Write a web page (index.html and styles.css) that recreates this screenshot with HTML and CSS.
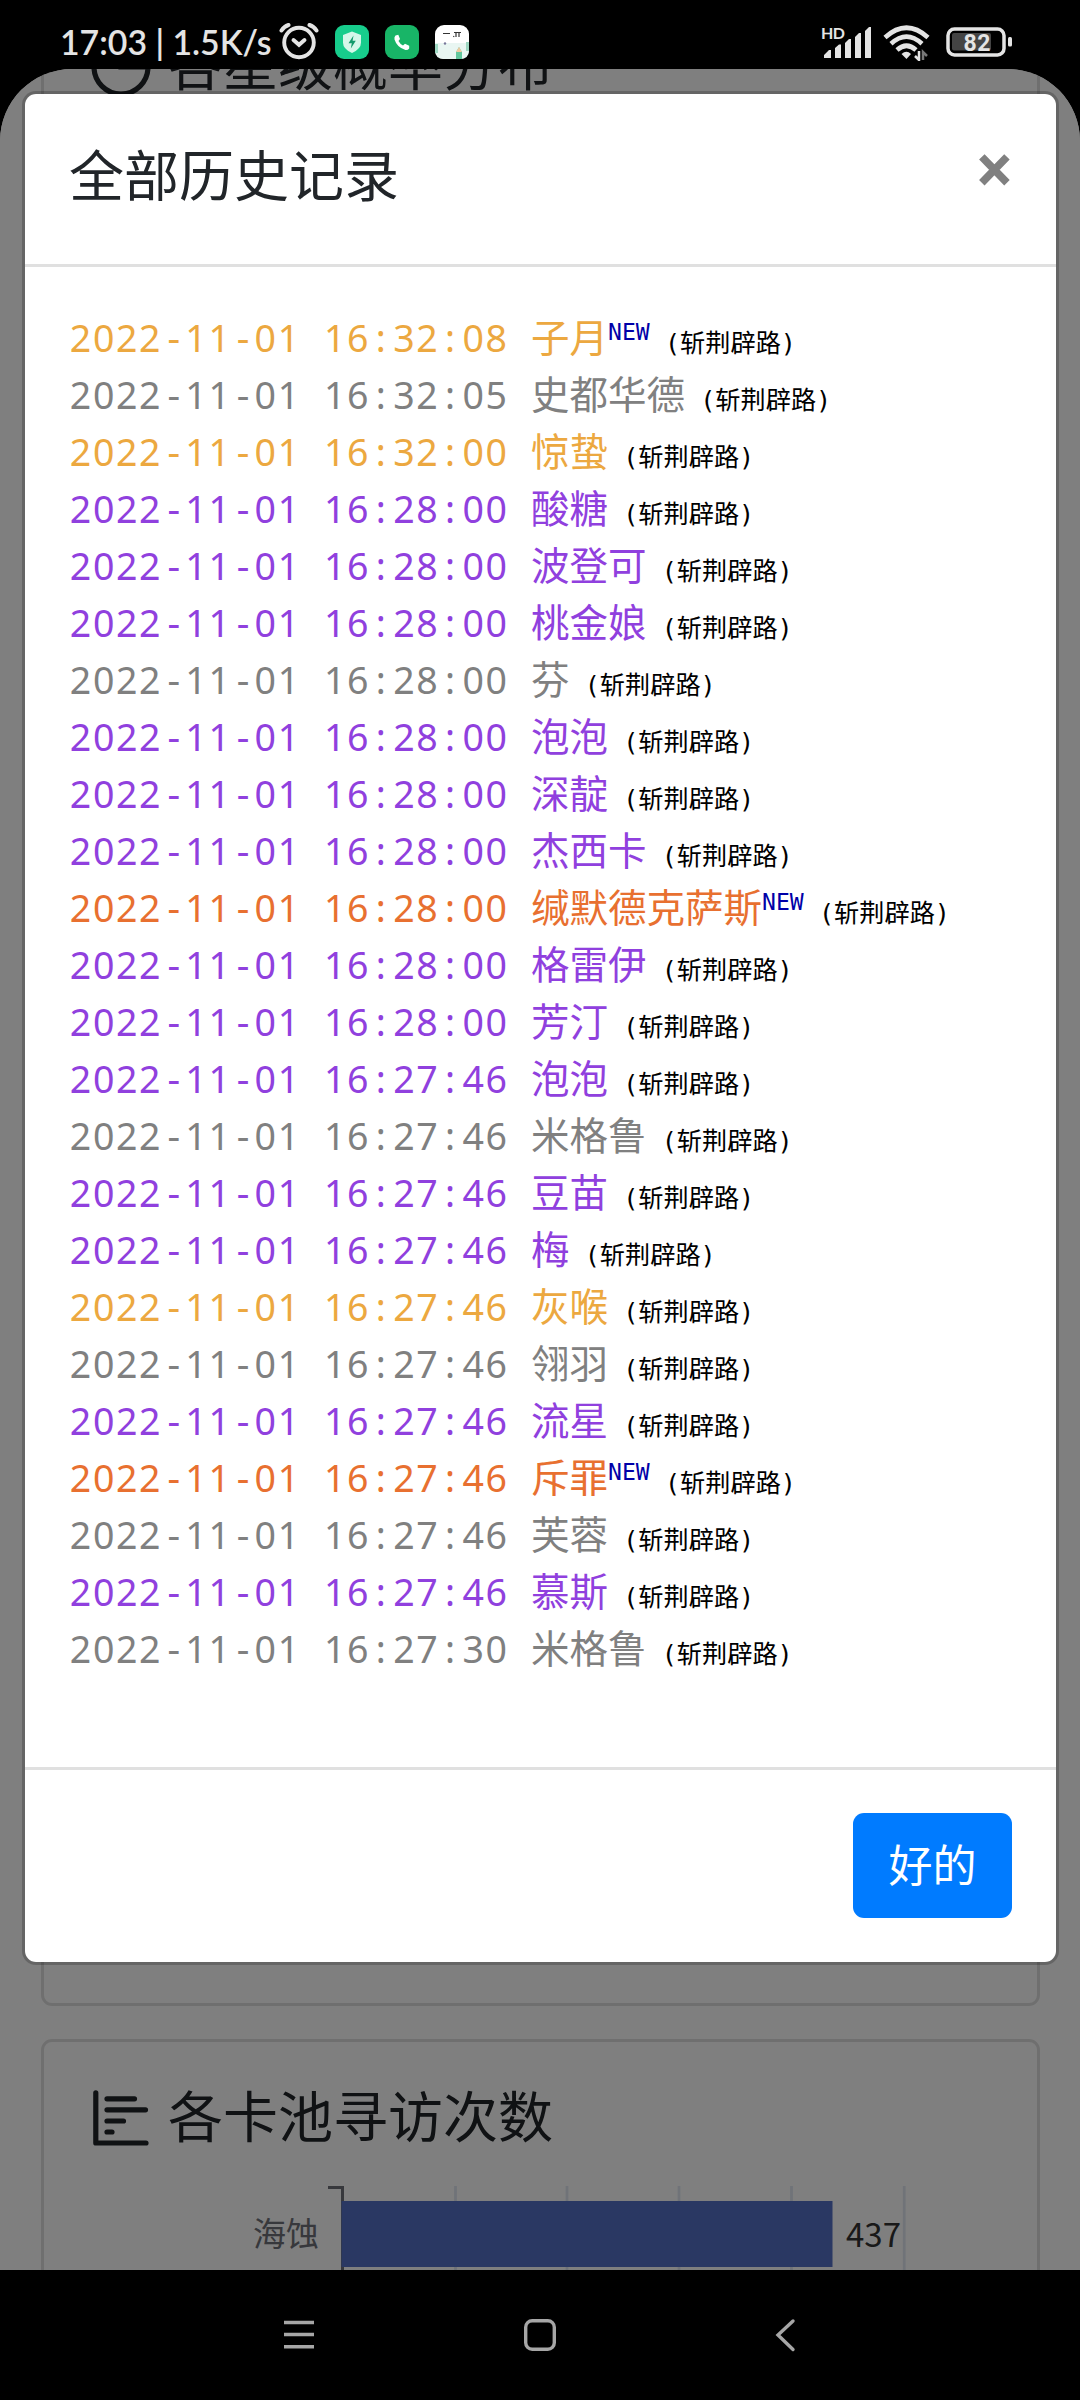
FILE: index.html
```html
<!DOCTYPE html>
<html lang="zh-CN">
<head>
  <meta charset="UTF-8" />
  <title>全部历史记录</title>
  <link rel="stylesheet" href="styles.css">
</head>
<body>

  <div class="status-bar">
    <span class="clock">17:03 | 1.5K/s</span>
    <svg class="alarm" width="40" height="38" viewBox="0 0 40 38" fill="none" stroke="#e4e4e4" stroke-linecap="round">
      <circle cx="20" cy="20.5" r="14.8" stroke-width="3.9" />
      <path d="M2.500 8.500Q5 4.500 9.500 3M37.500 8.500Q35 4.500 30.500 3" stroke-width="4" />
      <path d="M14.500 18L20 22.800L25.500 18" stroke-width="3.900" />
    </svg>
    <svg class="app-icon" width="34" height="34" viewBox="0 0 34 34">
      <rect width="34" height="34" rx="9" fill="#17cd8c" />
      <path d="M17 6.500L26 10V17.500Q26 24 17 28Q8 24 8 17.500V10Z" fill="#d5f7ea" />
      <path d="M18.500 10.500L13.500 18.300H16.800L15.800 23.500L20.800 15.800H17.600Z" fill="#149a6c" />
    </svg>
    <svg class="app-icon" width="34" height="34" viewBox="0 0 34 34">
      <rect width="34" height="34" rx="9" fill="#18b567" />
      <path d="M10.500 10.500Q9 12 9.500 14.500Q12 22.500 20.500 25Q23 25.200 24.200 23.500V20.800L20 18.800L18 20.500Q15 19 13.500 16L15 14L13.300 9.800Z" fill="#fff" />
    </svg>
    <svg class="app-icon" width="34" height="34" viewBox="0 0 34 34">
      <rect width="34" height="34" rx="9" fill="#fff" />
      <path d="M0 18H34V25Q34 34 25 34H9Q0 34 0 25Z" fill="#e9f6f2" />
      <path d="M0 19H3V28H0ZM31 17H34V26H31Z" fill="#9ed8c2" />
      <path d="M8 8.500H15M19 7.500H26M21 8V12M24 8V12M19 11L18.500 12" stroke="#333" stroke-width="1.200" />
      <path d="M21 27L24 22L27 27V34H21Z" fill="#62c79d" />
      <path d="M21 27L24 22L27 27Z" fill="#f1c9a0" />
      <circle cx="10" cy="18.500" r="1.200" fill="#779" />
    </svg>

    <div class="status-right">
      <svg width="52" height="36" viewBox="0 0 52 36" fill="#e4e4e4">
        <text class="hd" x="0" y="13.500" textLength="24">HD</text>
        <path d="M3 33V30L8 25H10V33ZM14 33V23L18 19.500H20V33ZM24 33V18L28 14H30V33ZM34 33V12L38 8H40V33ZM44 33V6L48 2H50V33Z" />
      </svg>
      <svg class="wifi" width="48" height="36" viewBox="0 0 48 36" fill="none" stroke="#e4e4e4" stroke-width="4.600">
        <path d="M2 12.500Q23.500 -7 45 12.500" />
        <path d="M8 18.800Q23.500 4.500 39 18.800" />
        <path d="M14 25Q23.500 16.500 33 25" />
        <path d="M18.500 29Q23.500 24.500 28 29L23.500 34Z" fill="#e4e4e4" stroke="none" />
        <path d="M36 26V35L32 31" stroke-width="2.500" />
        <path d="M40 35V27L44 31" stroke="#777" stroke-width="2.500" />
      </svg>
      <svg class="battery" width="67" height="30" viewBox="0 0 67 30">
        <rect x="2" y="2" width="56" height="26" rx="6.500" fill="none" stroke="#e4e4e4" stroke-width="3.500" />
        <rect x="6" y="6" width="39" height="17.500" rx="2" fill="#444" />
        <rect x="62" y="10" width="4" height="9.500" rx="1.500" fill="#e4e4e4" />
        <text class="level" x="17.500" y="23.500" textLength="27">82</text>
      </svg>
    </div>
  </div>

  <div class="web-view">
    <div class="page">
      <div class="card card-rate">
        <h5 class="card-title">
          <svg class="title-icon" width="56" height="56" viewBox="0 0 56 56" fill="none" stroke="#212529" stroke-width="5.200">
            <circle cx="28" cy="29" r="27" />
            <path d="M28 2V29H55" />
          </svg>
          各星级概率分布
        </h5>
      </div>
      <div class="card card-pool">
        <h5 class="card-title">
          <svg class="title-icon" width="56" height="56" viewBox="0 0 56 56" fill="none" stroke="#212529" stroke-width="5.200" stroke-linecap="round" stroke-linejoin="round">
            <path d="M2.800 2.800V53H53" />
            <path d="M14 8.800H41.500M14 19.800H52.500M14 31H30.500M14 42H19" />
          </svg>
          各卡池寻访次数
        </h5>
        <svg class="chart" width="993" height="90" viewBox="0 0 993 90">
          <g stroke="#e0e6f1" stroke-width="2.750">
            <path d="M411.500 0V90M523 0V90M635 0V90M747.500 0V90M860.200 0V90" />
          </g>
          <path d="M284 1.500H298.500V90" fill="none" stroke="#6e7079" stroke-width="3" />
          <rect x="297.500" y="15" width="491" height="66" fill="#5470c6" />
          <text class="axis-label" x="275" y="60" text-anchor="end">海蚀</text>
          <text class="bar-value" x="802" y="61">437</text>
        </svg>
      </div>
    </div>

    <div class="backdrop">
      <div class="modal">
        <div class="modal-header">
          <h5 class="modal-title">全部历史记录</h5>
          <span class="close">×</span>
        </div>
        <div class="modal-body" id="history"></div>
        <div class="modal-footer">
          <button type="button" class="btn">好的</button>
        </div>
      </div>
    </div>
  </div>

  <div class="nav-bar">
    <svg width="1080" height="130" viewBox="0 0 1080 130" fill="none" stroke="#a6a6a6" stroke-width="3.400">
      <path d="M284 52.500H314M284 64.500H314M284 76.700H314" />
      <rect x="525.700" y="50.700" width="28.600" height="28.600" rx="6.500" />
      <path d="M793 51L778 65L793 79.500" stroke-linecap="round" />
    </svg>
  </div>

  <script>
    // [时间, 干员, 星级, 是否新干员]
    const records = [
      ['16:32:08', '子月', 5, true],
      ['16:32:05', '史都华德', 3],
      ['16:32:00', '惊蛰', 5],
      ['16:28:00', '酸糖', 4],
      ['16:28:00', '波登可', 4],
      ['16:28:00', '桃金娘', 4],
      ['16:28:00', '芬', 3],
      ['16:28:00', '泡泡', 4],
      ['16:28:00', '深靛', 4],
      ['16:28:00', '杰西卡', 4],
      ['16:28:00', '缄默德克萨斯', 6, true],
      ['16:28:00', '格雷伊', 4],
      ['16:28:00', '芳汀', 4],
      ['16:27:46', '泡泡', 4],
      ['16:27:46', '米格鲁', 3],
      ['16:27:46', '豆苗', 4],
      ['16:27:46', '梅', 4],
      ['16:27:46', '灰喉', 5],
      ['16:27:46', '翎羽', 3],
      ['16:27:46', '流星', 4],
      ['16:27:46', '斥罪', 6, true],
      ['16:27:46', '芙蓉', 3],
      ['16:27:46', '慕斯', 4],
      ['16:27:30', '米格鲁', 3]
    ];

    document.getElementById('history').innerHTML = records.map(([time, name, star, isNew]) => {
      // 分隔符单独占一格，保持等宽
      const stamp = ('2022-11-01 ' + time)
        .replace(/:/g, '<i>:</i>')
        .replace(/-/g, '<i class="dash">-</i>');
      return `<div class="record star-${star}"><span class="time">${stamp} </span>` +
        `<span class="name">${name}</span>${isNew ? '<span class="new">NEW</span>' : ''}` +
        `<span class="pool"> (斩荆辟路)</span></div>`;
    }).join('');
  </script>

</body>
</html>
```

FILE: styles.css
```css
* {
  box-sizing: border-box;
}

body {
  margin: 0;
  width: 1080px;
  height: 2400px;
  background-color: #000;
  font-family: Roboto, "Noto Sans CJK SC", sans-serif;
  display: flex;
  flex-direction: column;
  overflow: hidden;
}

svg {
  display: block;
  flex: none;
}

h5 {
  margin: 0;
  font-weight: 400;
}

/* 状态栏 */
.status-bar {
  height: 69px;
  flex: none;
  display: flex;
  align-items: flex-start;
  padding: 25px 67px 0 60px;
}

.clock {
  width: 219px;
  margin-top: -5px;
  font-family: Lato, sans-serif;
  font-size: 33.8px;
  font-weight: 600;
  line-height: 44px;
  white-space: nowrap;
  color: #e4e4e4;
}

.alarm {
  margin-top: -3px;
}

.app-icon {
  margin-left: 16px;
}

.app-icon:first-of-type {
  margin-left: 15px;
}

.status-right {
  display: flex;
  margin-left: auto;
}

.hd {
  font-family: Lato, sans-serif;
  font-size: 16px;
  font-weight: 700;
}

.wifi {
  margin-left: 10px;
}

.battery {
  margin: 2px 0 0 15px;
}

.level {
  font-family: Roboto, sans-serif;
  font-size: 23px;
  font-weight: 700;
  fill: #e4e4e4;
}

/* 页面 */
.web-view {
  position: relative;
  height: 2201px;
  flex: none;
  overflow: hidden;
  border-radius: 72px 72px 0 0;
  background-color: #fff;
}

.page {
  display: flex;
  flex-direction: column;
  gap: 33px;
  margin-top: -82px;
  padding: 0 40px 0 41px;
}

.card {
  border: 3px solid rgba(0, 0, 0, 0.125);
  border-radius: 11px;
  padding-top: 43px;
}

.card-rate {
  height: 2019px;
}

.card-pool {
  height: 600px;
}

.card-title {
  display: flex;
  align-items: center;
  gap: 19px;
  padding-left: 49px;
  font-size: 55px;
  line-height: 66px;
  color: #212529;
}

.title-icon {
  overflow: visible;
}

.chart {
  margin-top: 35px;
}

.axis-label,
.bar-value {
  font-family: "Noto Sans CJK SC", sans-serif;
  font-size: 33px;
  fill: #6e7079;
}

.bar-value {
  fill: #333;
}

/* 弹窗 */
.backdrop {
  position: absolute;
  inset: 0;
  padding: 22px 21px 0 22px;
  background-color: rgba(0, 0, 0, 0.5);
}

.modal {
  height: 1874px;
  border: 3px solid rgba(0, 0, 0, 0.2);
  border-radius: 14px;
  background-color: #fff;
  background-clip: padding-box;
  display: flex;
  flex-direction: column;
}

.modal-header {
  height: 173px;
  flex: none;
  display: flex;
  justify-content: space-between;
  padding: 44px;
  border-bottom: 3px solid #e0e0e0;
}

.modal-title {
  font-size: 55px;
  line-height: 79px;
  color: #212529;
}

.close {
  font-size: 66px;
  font-weight: 700;
  line-height: 63px;
  color: #808080;
}

.modal-body {
  flex: 1;
  padding: 43px 44px;
}

.record {
  height: 57px;
  font-family: "DejaVu Sans Mono", "Noto Sans CJK SC", monospace;
  font-size: 38.5px;
  line-height: 57px;
  white-space: pre;
}

.record span,
.record i {
  line-height: 0;
}

.time {
  margin: 0 -0.8px 0 0.8px;
  font-family: "Noto Sans", sans-serif;
  font-size: 37.5px;
  letter-spacing: 1.65px;
  word-spacing: 11.7px;
}

.time i {
  display: inline-block;
  width: 23.1px;
  font-style: normal;
  text-align: center;
}

.time .dash {
  font-family: "DejaVu Sans Mono", monospace;
  letter-spacing: 0;
}

.name {
  font-family: "Noto Sans CJK SC", sans-serif;
}

.new {
  font-size: 23.1px;
  vertical-align: 12px;
  color: #0000a8;
}

.pool {
  font-size: 25.2px;
  color: #000;
}

.star-3 {
  color: #808080;
}

.star-4 {
  color: #9040de;
}

.star-5 {
  color: #eca840;
}

.star-6 {
  color: #e87030;
}

.modal-footer {
  height: 195px;
  flex: none;
  display: flex;
  justify-content: flex-end;
  align-items: flex-start;
  padding: 43px 44px 0;
  border-top: 3px solid #e0e0e0;
}

.btn {
  width: 159px;
  height: 105px;
  padding: 0 0 6px;
  border: none;
  border-radius: 11px;
  background-color: #007bff;
  color: #fff;
  font-family: "Noto Sans CJK SC", sans-serif;
  font-size: 44px;
}

/* 导航栏 */
.nav-bar {
  height: 130px;
  flex: none;
}
```
